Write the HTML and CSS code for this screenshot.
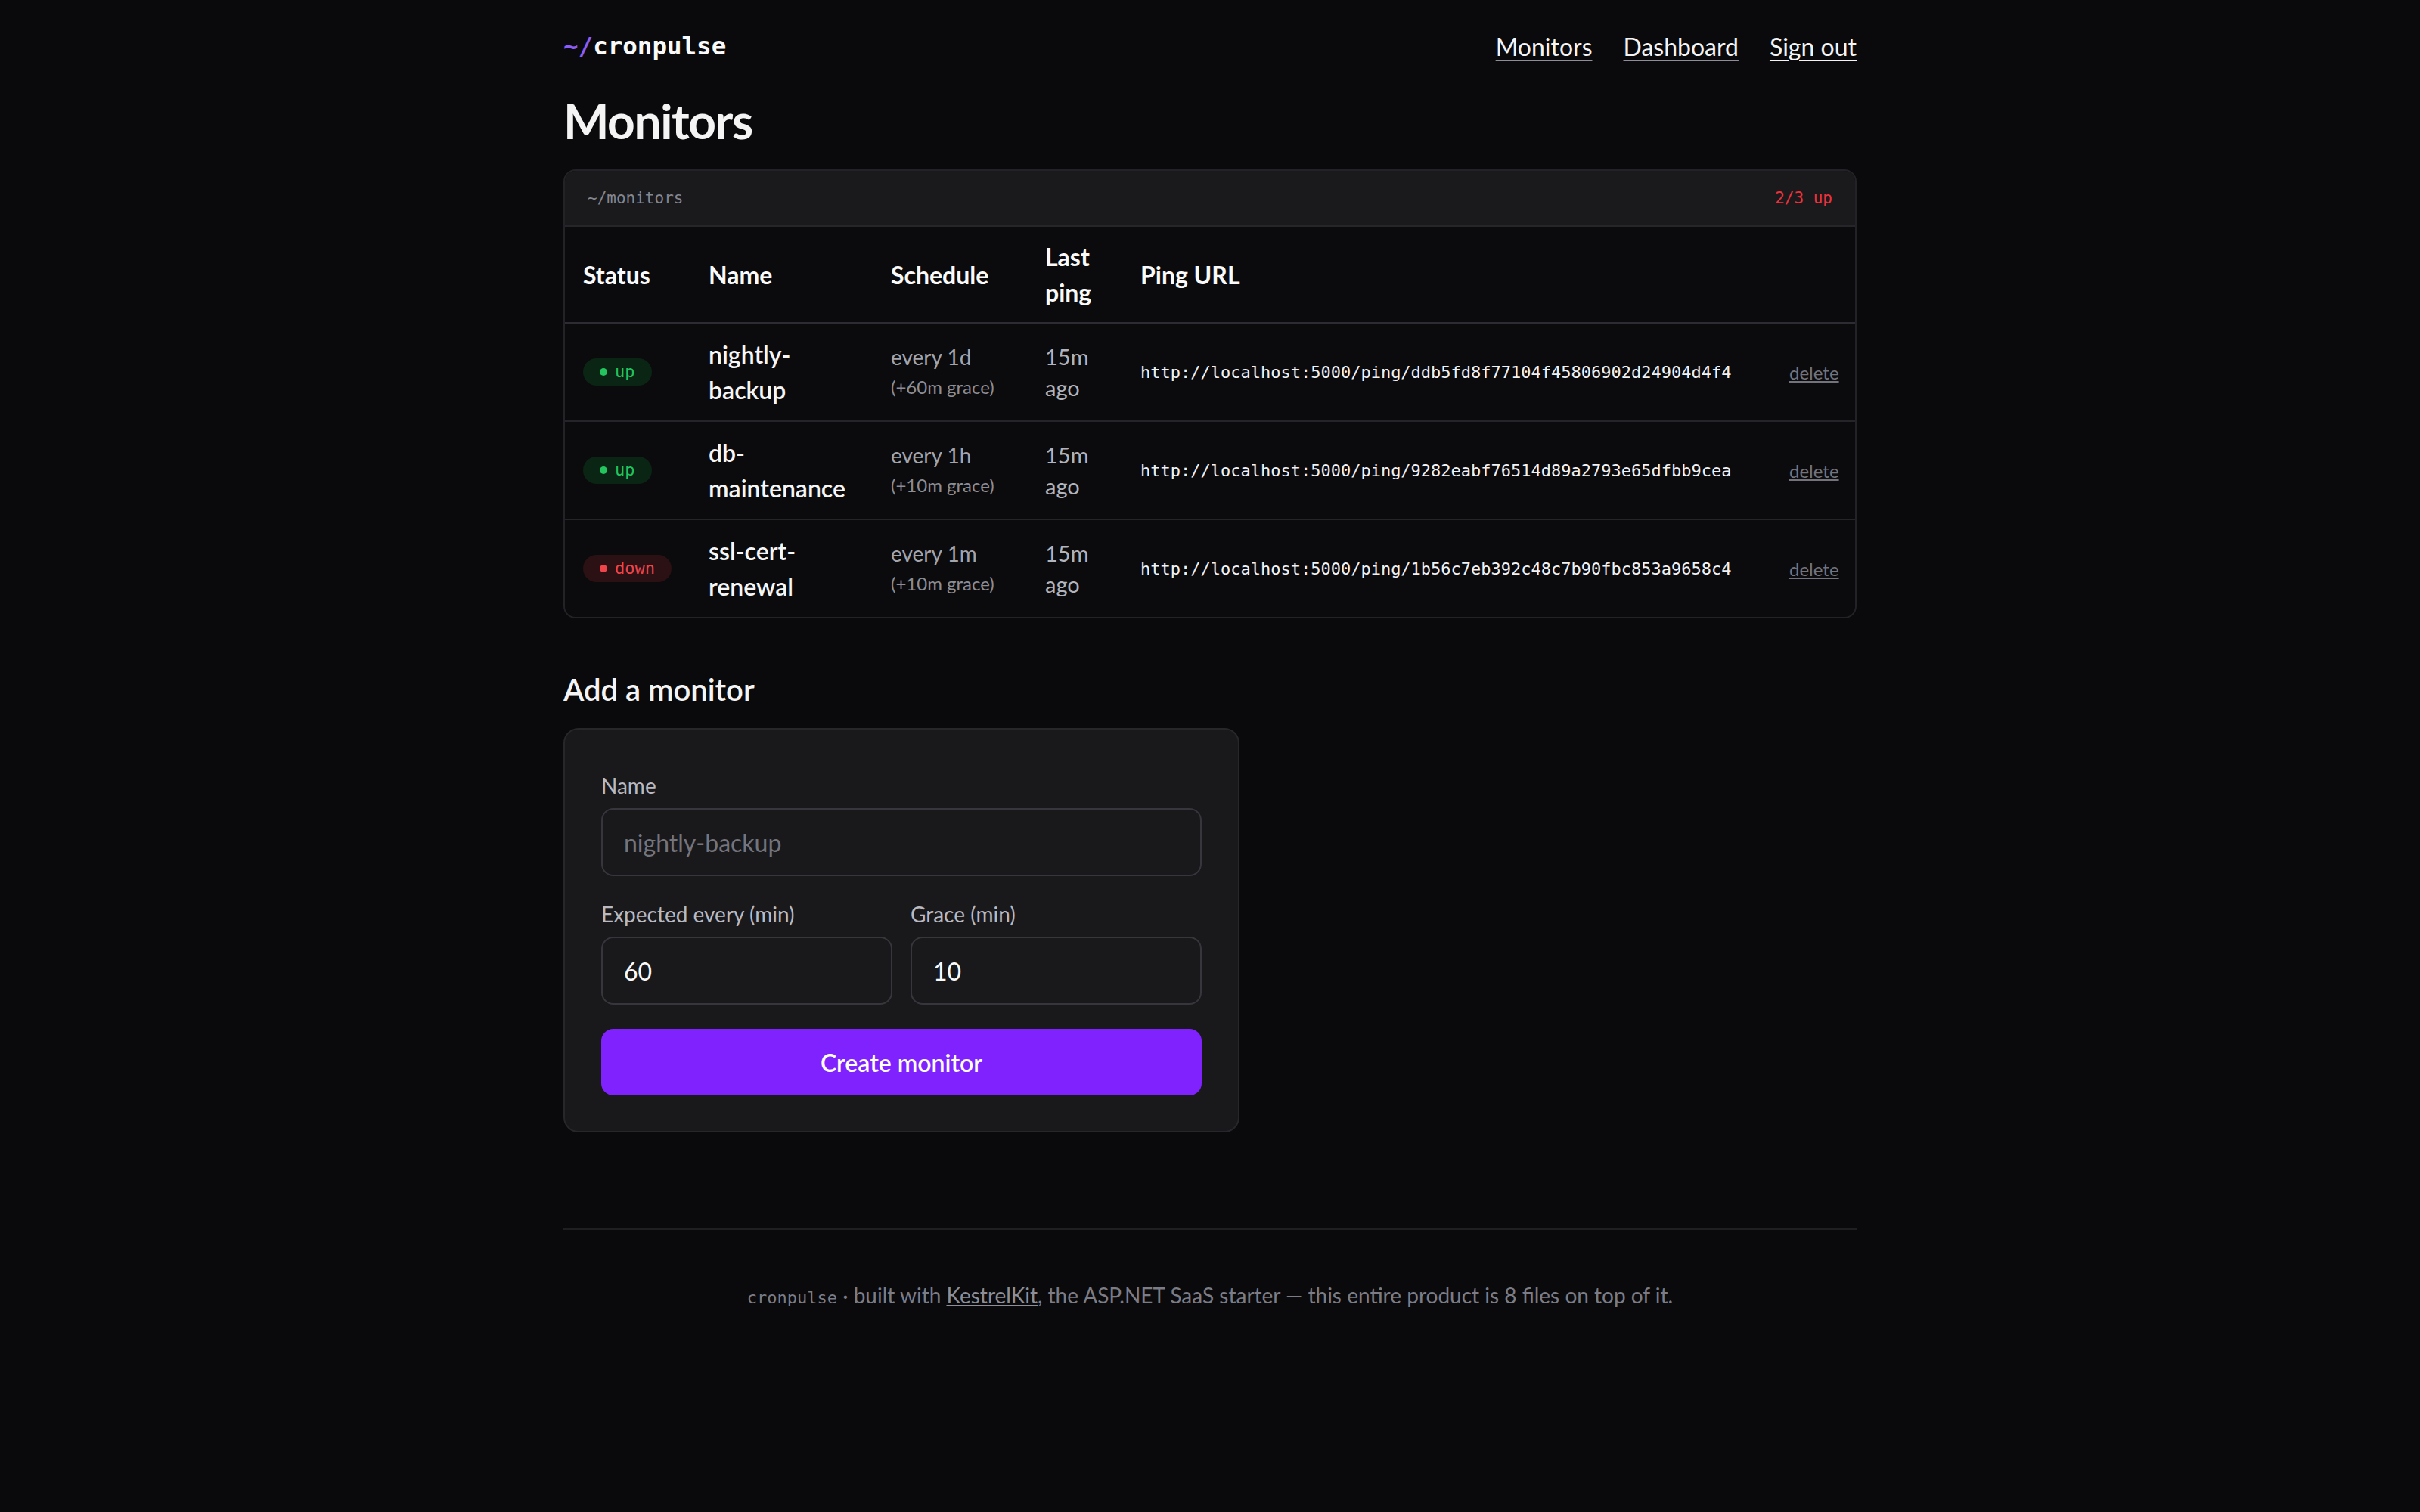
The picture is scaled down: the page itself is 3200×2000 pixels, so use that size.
FILE: index.html
```html
<!DOCTYPE html>
<html lang="en">
<head>
    <meta charset="UTF-8">
    <meta name="viewport" content="width=device-width, initial-scale=1.0">
    <title>Monitors · cronpulse</title>
    <link rel="stylesheet" href="styles.css">
</head>
<body>
    <div class="wrap">
        <header class="topbar">
            <a class="logo" href="#"><span class="tilde">~/</span>cronpulse</a>
            <nav class="nav">
                <a href="#">Monitors</a>
                <a href="#">Dashboard</a>
                <a href="#" class="signout">Sign out</a>
            </nav>
        </header>

        <h1>Monitors</h1>

        <div class="panel">
            <div class="panel-head">
                <span>~/monitors</span>
                <span class="count-bad">2/3 up</span>
            </div>
            <table class="monitors">
                <colgroup>
                    <col class="c-status">
                    <col class="c-name">
                    <col class="c-schedule">
                    <col class="c-last">
                    <col class="c-url">
                    <col>
                </colgroup>
                <thead>
                    <tr>
                        <th>Status</th>
                        <th>Name</th>
                        <th>Schedule</th>
                        <th>Last ping</th>
                        <th>Ping URL</th>
                        <th></th>
                    </tr>
                </thead>
                <tbody>
                    <tr>
                        <td><span class="badge up"><i></i>up</span></td>
                        <td class="name">nightly-backup</td>
                        <td class="sched">every 1d<small>(+60m grace)</small></td>
                        <td class="last">15m ago</td>
                        <td class="url">http://localhost:5000/ping/ddb5fd8f77104f45806902d24904d4f4</td>
                        <td class="act"><a href="#">delete</a></td>
                    </tr>
                    <tr>
                        <td><span class="badge up"><i></i>up</span></td>
                        <td class="name">db-maintenance</td>
                        <td class="sched">every 1h<small>(+10m grace)</small></td>
                        <td class="last">15m ago</td>
                        <td class="url">http://localhost:5000/ping/9282eabf76514d89a2793e65dfbb9cea</td>
                        <td class="act"><a href="#">delete</a></td>
                    </tr>
                    <tr>
                        <td><span class="badge down"><i></i>down</span></td>
                        <td class="name">ssl-cert-renewal</td>
                        <td class="sched">every 1m<small>(+10m grace)</small></td>
                        <td class="last">15m ago</td>
                        <td class="url">http://localhost:5000/ping/1b56c7eb392c48c7b90fbc853a9658c4</td>
                        <td class="act"><a href="#">delete</a></td>
                    </tr>
                </tbody>
            </table>
        </div>

        <h2>Add a monitor</h2>

        <form class="new-monitor" onsubmit="return false">
            <div class="field">
                <label for="name">Name</label>
                <input id="name" type="text" placeholder="nightly-backup">
            </div>
            <div class="row">
                <div class="field">
                    <label for="every">Expected every (min)</label>
                    <input id="every" type="number" value="60">
                </div>
                <div class="field">
                    <label for="grace">Grace (min)</label>
                    <input id="grace" type="number" value="10">
                </div>
            </div>
            <button type="submit">Create monitor</button>
        </form>

        <footer class="foot">
            <code>cronpulse</code> · built with <a href="#">KestrelKit</a>, the ASP.NET SaaS starter — this entire product is 8 files on top of it.
        </footer>
    </div>
</body>
</html>
```

FILE: styles.css
```css
body {
    margin: 0;
    background-color: #0a0a0c;
    color: #f4f4f5;
    font-family: Lato, "Noto Sans", sans-serif;
}
.wrap {
    width: 1710px;
    margin: 0 auto;
}
.topbar {
    display: flex;
    justify-content: space-between;
    align-items: center;
    height: 70px;
    padding-top: 26px;
}
.logo {
    font-family: "DejaVu Sans Mono", "Liberation Mono", monospace;
    font-weight: bold;
    font-size: 32.5px;
    color: #fafafa;
    text-decoration: none;
}
.logo .tilde {
    color: #8b5cf6;
}
.nav {
    display: flex;
    gap: 41px;
}
.nav a {
    color: #f4f4f5;
    font-size: 32px;
    text-decoration-color: #8e8e98;
    text-underline-offset: 5px;
    text-decoration-thickness: 2px;
}
.nav a.signout {
    text-decoration-color: #f4f4f5;
}
h1 {
    font-size: 64px;
    font-weight: bold;
    line-height: 77px;
    margin: 25px 0 26px;
    letter-spacing: -1.4px;
}
.panel {
    border: 2px solid #222227;
    border-radius: 16px;
    overflow: hidden;
    background-color: #0b0b0e;
}
.panel-head {
    display: flex;
    justify-content: space-between;
    align-items: center;
    height: 72px;
    padding: 0 30px;
    background-color: #1a1a1d;
    border-bottom: 2px solid #26262a;
    font-family: "DejaVu Sans Mono", monospace;
    font-size: 21px;
    color: #86868f;
}
.count-bad {
    color: #f0313b;
}
.monitors {
    width: 100%;
    border-collapse: collapse;
    table-layout: fixed;
}
.c-status { width: 166px; }
.c-name { width: 241px; }
.c-schedule { width: 204px; }
.c-last { width: 126px; }
.c-url { width: 858px; }
.monitors th {
    text-align: left;
    font-size: 32px;
    font-weight: bold;
    line-height: 47px;
    padding: 16px 24px;
    color: #fafafa;
    border-bottom: 2px solid #2c2c32;
}
.monitors td {
    padding: 17px 24px;
    vertical-align: middle;
    border-bottom: 2px solid #242429;
}
.monitors tbody tr:last-child td {
    border-bottom: none;
}
.badge {
    display: inline-flex;
    align-items: center;
    gap: 10px;
    padding: 4px 22px;
    border-radius: 20px;
    font-family: "DejaVu Sans Mono", monospace;
    font-size: 22px;
    line-height: 28px;
}
.badge i {
    width: 10px;
    height: 10px;
    border-radius: 50%;
    background-color: currentColor;
}
.badge.up {
    background-color: #0b2514;
    color: #22c55e;
}
.badge.down {
    background-color: #2b1114;
    color: #f0444b;
}
.name {
    font-size: 32px;
    font-weight: 600;
    line-height: 47px;
    color: #f6f6f7;
}
.sched {
    font-size: 28px;
    line-height: 40px;
    color: #a4a4ad;
}
.sched small {
    display: block;
    font-size: 24px;
    line-height: 40px;
    color: #8d8d96;
}
.last {
    font-size: 29px;
    line-height: 41px;
    color: #b3b3bb;
}
.url {
    font-family: "DejaVu Sans Mono", monospace;
    font-size: 22px;
    color: #f2f2f5;
    white-space: nowrap;
}
.act {
    text-align: right;
}
.act a {
    font-size: 24px;
    color: #73737c;
}
h2 {
    font-size: 40px;
    font-weight: 600;
    line-height: 48px;
    margin: 70px 0 27px;
}
.new-monitor {
    width: 894px;
    box-sizing: border-box;
    padding: 54px 48px 47px;
    background-color: #19191c;
    border: 2px solid #27272b;
    border-radius: 20px;
    display: flex;
    flex-direction: column;
    gap: 30px;
}
.row {
    display: grid;
    grid-template-columns: 1fr 1fr;
    gap: 24px;
}
.field label {
    display: block;
    font-size: 28px;
    line-height: 40px;
    margin-bottom: 10px;
    color: #b9b9c1;
}
.field input {
    display: block;
    width: 100%;
    height: 90px;
    box-sizing: border-box;
    padding: 0 28px;
    background-color: #19191c;
    border: 2px solid #36363c;
    border-radius: 16px;
    color: #fafafa;
    font-family: inherit;
    font-size: 32px;
    outline: none;
}
.field input::placeholder {
    color: #74747c;
}
.field input::-webkit-inner-spin-button {
    -webkit-appearance: none;
}
.new-monitor button {
    margin-top: 2px;
    height: 88px;
    border: none;
    border-radius: 16px;
    background-color: #7f22fe;
    color: #fff;
    font-family: inherit;
    font-size: 32px;
    font-weight: 600;
    cursor: pointer;
}
.foot {
    margin-top: 127px;
    border-top: 2px solid #1f1f23;
    padding-top: 66px;
    text-align: center;
    font-size: 28px;
    line-height: 40px;
    color: #7c7c86;
}
.foot code {
    font-family: "DejaVu Sans Mono", monospace;
    font-size: 22px;
}
.foot a {
    color: #8e8e98;
}
```
